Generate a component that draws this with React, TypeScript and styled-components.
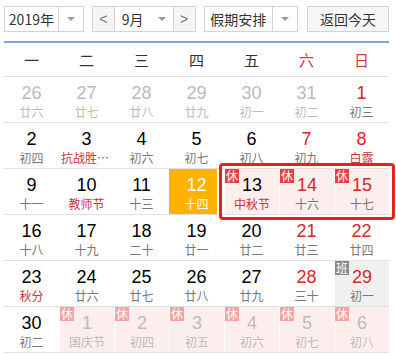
import { createGlobalStyle } from 'styled-components';
import styled, { css } from 'styled-components';

type Day = {
  n: number;
  lunar: string;
  other?: boolean;
  red?: boolean;
  fest?: boolean;
  today?: boolean;
  rest?: boolean;
  work?: boolean;
  faded?: boolean;
};

const GlobalStyle = createGlobalStyle`
  body {
    margin: 0;
    background: #fff;
    font-family: "Liberation Sans", "Noto Sans CJK SC", sans-serif;
  }
`;

const WEEKDAYS = ['一', '二', '三', '四', '五', '六', '日'];

const WEEKS: Day[][] = [
  [
    { n: 26, lunar: '廿六', other: true },
    { n: 27, lunar: '廿七', other: true },
    { n: 28, lunar: '廿八', other: true },
    { n: 29, lunar: '廿九', other: true },
    { n: 30, lunar: '初一', other: true },
    { n: 31, lunar: '初二', other: true },
    { n: 1, lunar: '初三', red: true },
  ],
  [
    { n: 2, lunar: '初四' },
    { n: 3, lunar: '抗战胜利纪念日', fest: true },
    { n: 4, lunar: '初六' },
    { n: 5, lunar: '初七' },
    { n: 6, lunar: '初八' },
    { n: 7, lunar: '初九', red: true },
    { n: 8, lunar: '白露', red: true, fest: true },
  ],
  [
    { n: 9, lunar: '十一' },
    { n: 10, lunar: '教师节', fest: true },
    { n: 11, lunar: '十三' },
    { n: 12, lunar: '十四', today: true },
    { n: 13, lunar: '中秋节', fest: true, rest: true },
    { n: 14, lunar: '十六', red: true, rest: true },
    { n: 15, lunar: '十七', red: true, rest: true },
  ],
  [
    { n: 16, lunar: '十八' },
    { n: 17, lunar: '十九' },
    { n: 18, lunar: '二十' },
    { n: 19, lunar: '廿一' },
    { n: 20, lunar: '廿二' },
    { n: 21, lunar: '廿三', red: true },
    { n: 22, lunar: '廿四', red: true },
  ],
  [
    { n: 23, lunar: '秋分', fest: true },
    { n: 24, lunar: '廿六' },
    { n: 25, lunar: '廿七' },
    { n: 26, lunar: '廿八' },
    { n: 27, lunar: '廿九' },
    { n: 28, lunar: '三十', red: true },
    { n: 29, lunar: '初一', red: true, work: true },
  ],
  [
    { n: 30, lunar: '初二' },
    { n: 1, lunar: '国庆节', rest: true, faded: true },
    { n: 2, lunar: '初四', rest: true, faded: true },
    { n: 3, lunar: '初五', rest: true, faded: true },
    { n: 4, lunar: '初六', rest: true, faded: true },
    { n: 5, lunar: '初七', rest: true, faded: true },
    { n: 6, lunar: '初八', rest: true, faded: true },
  ],
];

const Wrap = styled.div`
  width: 385px;
  padding: 6px 0 0 4px;
`;

const Toolbar = styled.div`
  display: flex;
  height: 26px;
  margin-bottom: 9px;
  font-size: 14px;
  color: #333;
`;

const Box = styled.div<{ $w: number; $ml?: number }>`
  display: flex;
  box-sizing: border-box;
  width: ${(p) => p.$w}px;
  margin-left: ${(p) => p.$ml ?? 0}px;
  border: 1px solid #d3d3d3;
  background: #fff;
`;

const Label = styled.div`
  flex: 1;
  display: flex;
  align-items: center;
  justify-content: center;
  font-family: "Noto Sans CJK SC", sans-serif;
  font-size: 14px;
  line-height: 1;
`;

const Caret = styled.div<{ $w: number; $line?: boolean }>`
  width: ${(p) => p.$w}px;
  display: flex;
  align-items: center;
  justify-content: center;
  border-left: ${(p) => (p.$line ? '1px solid #d3d3d3' : 'none')};
  &::after {
    content: '';
    border-left: 4px solid transparent;
    border-right: 4px solid transparent;
    border-top: 4px solid #999;
  }
`;

const Step = styled.div<{ $side: 'l' | 'r' }>`
  width: 21px;
  display: flex;
  align-items: center;
  justify-content: center;
  background: #f5f5f5;
  color: #777;
  ${(p) => (p.$side === 'l' ? 'border-right: 1px solid #d3d3d3;' : 'border-left: 1px solid #d3d3d3;')}
`;

const TodayBtn = styled.div`
  box-sizing: border-box;
  width: 82px;
  margin-left: 9px;
  border: 1px solid #d3d3d3;
  background: #f6f6f6;
  display: flex;
  align-items: center;
  justify-content: center;
  font-family: "Noto Sans CJK SC", sans-serif;
  font-size: 14px;
  color: #333;
`;

const Head = styled.div`
  display: grid;
  grid-template-columns: repeat(7, 55px);
  height: 33px;
  border-top: 2px solid #7ea6e0;
  border-bottom: 1px solid #e0e0e0;
`;

const HeadCell = styled.div<{ $red?: boolean }>`
  display: flex;
  align-items: center;
  justify-content: center;
  font-family: "Noto Sans CJK SC", sans-serif;
  font-size: 15px;
  color: ${(p) => (p.$red ? '#d0393b' : '#333')};
`;

const Week = styled.div`
  position: relative;
  display: grid;
  grid-template-columns: repeat(7, 55px);
  height: 45px;
  border-bottom: 1px solid #e0e0e0;
`;

const Cell = styled.div<{ $d: Day }>`
  position: relative;
  box-sizing: border-box;
  display: flex;
  flex-direction: column;
  align-items: center;
  padding-top: 6px;
  ${(p) =>
    p.$d.rest &&
    css`
      background: #fdeeee;
      border-left: 1px solid #fff;
    `}
  ${(p) =>
    p.$d.work &&
    css`
      background: #f0f0f0;
      border-left: 1px solid #fff;
    `}
  ${(p) =>
    p.$d.today &&
    css`
      background: linear-gradient(#ffb200, #ffb200) no-repeat 0 0 / 48px 46px;
    `}
`;

const Num = styled.div<{ $c: string }>`
  font-size: 18px;
  line-height: 20px;
  color: ${(p) => p.$c};
`;

const Lunar = styled.div<{ $c: string }>`
  margin-top: 1px;
  max-width: 51px;
  overflow: hidden;
  white-space: nowrap;
  text-overflow: ellipsis;
  font-family: "Noto Sans CJK SC", sans-serif;
  font-size: 12px;
  line-height: 16px;
  color: ${(p) => p.$c};
`;

const Badge = styled.span<{ $kind: 'rest' | 'work'; $faded?: boolean }>`
  position: absolute;
  top: 0;
  left: 0;
  width: 14px;
  height: 14px;
  display: flex;
  align-items: center;
  justify-content: center;
  font-family: "Noto Sans CJK SC", sans-serif;
  font-size: 12px;
  line-height: 1;
  color: #fff;
  background: ${(p) => (p.$kind === 'work' ? '#888' : p.$faded ? '#f3a3a3' : '#e8403d')};
`;

const Focus = styled.div`
  position: absolute;
  left: 215px;
  top: -6px;
  width: 176px;
  height: 57px;
  box-sizing: border-box;
  border: 3px solid #e3211d;
  border-radius: 4px;
  pointer-events: none;
`;

function colors(d: Day) {
  if (d.today) return { num: '#fff', lunar: '#fff' };
  if (d.other || d.faded) return { num: '#bbb', lunar: '#bbb' };
  const num = d.red ? '#d8262b' : '#000';
  const lunar = d.fest ? '#c8353a' : '#777';
  return { num, lunar };
}

function DayCell({ d }: { d: Day }) {
  const c = colors(d);
  return (
    <Cell $d={d}>
      {d.rest && (
        <Badge $kind="rest" $faded={d.faded}>
          休
        </Badge>
      )}
      {d.work && <Badge $kind="work">班</Badge>}
      <Num $c={c.num}>{d.n}</Num>
      <Lunar $c={c.lunar}>{d.lunar}</Lunar>
    </Cell>
  );
}

export default function App() {
  return (
    <Wrap>
      <GlobalStyle />
      <Toolbar>
        <Box $w={80}>
          <Label>2019年</Label>
          <Caret $w={24} $line />
        </Box>
        <Box $w={104} $ml={8}>
          <Step $side="l">&lt;</Step>
          <Label>9月</Label>
          <Caret $w={22} />
          <Step $side="r">&gt;</Step>
        </Box>
        <Box $w={95} $ml={8}>
          <Label>假期安排</Label>
          <Caret $w={24} $line />
        </Box>
        <TodayBtn>返回今天</TodayBtn>
      </Toolbar>
      <Head>
        {WEEKDAYS.map((w, i) => (
          <HeadCell key={w} $red={i >= 5}>
            {w}
          </HeadCell>
        ))}
      </Head>
      {WEEKS.map((week, wi) => (
        <Week key={wi}>
          {week.map((d, di) => (
            <DayCell key={di} d={d} />
          ))}
          {wi === 2 && <Focus />}
        </Week>
      ))}
    </Wrap>
  );
}
